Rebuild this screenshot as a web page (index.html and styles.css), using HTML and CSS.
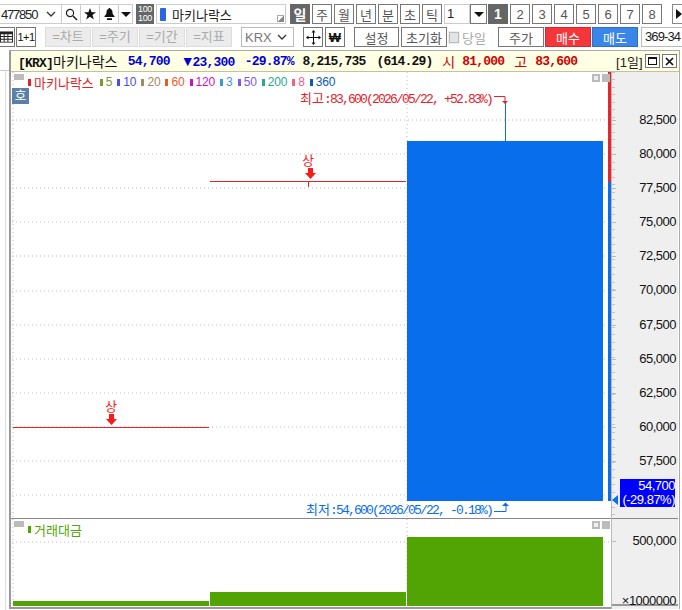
FILE: index.html
```html
<!DOCTYPE html>
<html lang="ko">
<head>
    <meta charset="UTF-8">
    <title>마키나락스 차트</title>
    <link rel="stylesheet" href="styles.css">
</head>
<body>

<div class="rail"></div>

<div class="toolbar toolbar-top">
    <div class="code-box">
        <span>477850</span>
        <svg class="chevron" width="10" height="6" viewBox="0 0 10 6"><path d="M1 1l4 4 4-4" fill="none" stroke="#333" stroke-width="1.3"/></svg>
    </div>
    <button class="tool icon-tool">
        <svg width="13" height="13" viewBox="0 0 13 13"><circle cx="5" cy="5" r="3.6" fill="none" stroke="#222" stroke-width="1.2"/><path d="M8 8l4 4" stroke="#222" stroke-width="1.6"/></svg>
    </button>
    <button class="tool icon-tool">
        <svg width="12" height="12" viewBox="0 0 12 12"><path d="M6 0l1.6 4.2H12L8.500 6.900 9.800 11.500 6 8.800 2.200 11.500 3.500 6.900 0 4.200h4.400z" fill="#111"/></svg>
    </button>
    <button class="tool icon-tool">
        <svg width="11" height="12" viewBox="0 0 11 12"><path d="M5.500 0c.7 0 1 .5 1 1 1.500.5 2 1.800 2 3.500 0 1.500.8 2.800 2 3.500v1H.5V8c1.200-.7 2-2 2-3.500 0-1.700.5-3 2-3.500 0-.5.300-1 1-1zM3 10.300h5V12H3z" fill="#111"/></svg>
    </button>
    <button class="tool caret-tool"><i class="caret"></i></button>
    <div class="group-box"><span>100</span><span>100</span></div>
    <div class="name-box">
        <i class="name-mark"></i>
        <span>마키나락스</span>
        <i class="grip"></i>
    </div>
    <div class="period-group">
        <button class="tool period on">일</button>
        <button class="tool period">주</button>
        <button class="tool period">월</button>
        <button class="tool period">년</button>
        <button class="tool period">분</button>
        <button class="tool period">초</button>
        <button class="tool period">틱</button>
    </div>
    <div class="count-box"><span>1</span></div>
    <button class="tool count-drop"><i class="caret"></i></button>
    <div class="number-group">
        <button class="tool period on">1</button>
        <button class="tool period">2</button>
        <button class="tool period">3</button>
        <button class="tool period">4</button>
        <button class="tool period">5</button>
        <button class="tool period">6</button>
        <button class="tool period">7</button>
        <button class="tool period">8</button>
    </div>
    <button class="tool more"><i class="caret-right"></i></button>
</div>

<div class="toolbar toolbar-second">
    <button class="tool table-tool">
        <svg width="14" height="12" viewBox="0 0 14 12"><path d="M0 0h14v12H0z" fill="#222"/><path d="M1 3h3v2H1zM5 3h3v2H5zM9 3h4v2H9zM1 6h3v2H1zM5 6h3v2H5zM9 6h4v2H9zM1 9h3v2H1zM5 9h3v2H5zM9 9h4v2H9z" fill="#fff"/></svg>
    </button>
    <button class="tool ratio">1+1</button>
    <div class="chart-tabs">
        <span class="chart-tab">=차트</span>
        <span class="chart-tab">=주기</span>
        <span class="chart-tab">=기간</span>
        <span class="chart-tab">=지표</span>
    </div>
    <div class="market-box">
        <span>KRX</span>
        <svg width="10" height="6" viewBox="0 0 10 6"><path d="M1 1l4 4 4-4" fill="none" stroke="#333" stroke-width="1.3"/></svg>
    </div>
    <button class="tool wide-icon move-tool">
        <svg width="15" height="15" viewBox="0 0 15 15"><path d="M7.500 1v13M1 7.500h13" stroke="#111" stroke-width="1"/><path d="M7.500 0l2 2.500h-4zM7.500 15l2-2.500h-4zM0 7.500l2.500-2v4zM15 7.500l-2.500-2v4z" fill="#111"/></svg>
    </button>
    <button class="tool wide-icon won">₩</button>
    <button class="tool action first-action">설정</button>
    <button class="tool action">초기화</button>
    <label class="today"><i class="check"></i><span>당일</span></label>
    <button class="tool action price">주가</button>
    <button class="tool action buy">매수</button>
    <button class="tool action sell">매도</button>
    <div class="range-box">369-34</div>
</div>

<div class="window">
    <div class="titlebar">
        <span class="tt name">[KRX]<span class="ko">마키나락스</span></span>
        <span class="tt blue last">54,700</span>
        <span class="tt blue change"><span class="ko down">▼</span>23,300</span>
        <span class="tt blue rate">-29.87%</span>
        <span class="tt volume">8,215,735</span>
        <span class="tt amount">(614.29)</span>
        <span class="tt red open-l"><span class="ko">시</span></span>
        <span class="tt red open-v">81,000</span>
        <span class="tt red high-l"><span class="ko">고</span></span>
        <span class="tt red high-v">83,600</span>
        <span class="term">[1일]</span>
        <button class="win-btn"><i class="win-max"></i></button>
        <button class="win-btn"><svg width="9" height="9" viewBox="0 0 9 9"><path d="M1 1l7 7M8 1L1 8" stroke="#111" stroke-width="1.700"/></svg></button>
    </div>

    <div class="chart-body">
        <div class="panes">
            <div class="pane price-pane">
                <svg class="canvas" width="600" height="446" viewBox="0 0 600 446">
                    <g class="grid">
                        <path d="M1 48H599M1 82H599M1 116H599M1 150H599M1 184H599M1 219H599M1 253H599M1 287H599M1 321H599M1 355H599M1 389H599M1 423H599"/>
                        <path d="M2 0V446M396 0V446"/>
                    </g>
                    <rect x="396" y="69" width="196" height="360" fill="#086eec"/>
                    <rect x="494" y="31" width="1" height="38" fill="#086eec"/>
                    <rect x="597" y="0" width="3" height="110" fill="#e8252b"/>
                    <rect x="597" y="110" width="3" height="319" fill="#086eec"/>
                    <path d="M199 109.500H395M297.500 109.500V115M2 355.500H198" stroke="#e3232a" fill="none"/>
                    <path d="M294 96h5v5h3l-5.500 6-5.500-6h3zM95 342h5v5h3l-5.500 6-5.500-6h3z" fill="#f91a1a" transform="translate(3 0)"/>
                    <path d="M483 24.500h11V30" stroke="#e3232a" fill="none"/>
                    <path d="M491 29h6l-3 3z" fill="#e3232a"/>
                    <path d="M483 439.500h12V433" stroke="#086eec" fill="none"/>
                    <path d="M491 434l3.500-3.500 3.500 3.500z" fill="#086eec"/>
                </svg>

                <div class="legend">
                    <i class="flag"></i>
                    <span class="lg c-main"><i></i>마키나락스</span>
                    <span class="lg c5"><i></i>5</span>
                    <span class="lg c10"><i></i>10</span>
                    <span class="lg c20"><i></i>20</span>
                    <span class="lg c60"><i></i>60</span>
                    <span class="lg c120"><i></i>120</span>
                    <span class="lg c3"><i></i>3</span>
                    <span class="lg c50"><i></i>50</span>
                    <span class="lg c200"><i></i>200</span>
                    <span class="lg c8"><i></i>8</span>
                    <span class="lg c360"><i></i>360</span>
                </div>
                <div class="pane-btns"><i class="pane-min"></i><i class="pane-close"></i></div>
                <span class="ho">호</span>
                <span class="note high-note"><span class="ko">최고</span>:83,600(2026/05/22, +52.83%)</span>
                <span class="note low-note"><span class="ko">최저</span>:54,600(2026/05/22, -0.18%)</span>
                <span class="limit limit-one">상</span>
                <span class="limit limit-two">상</span>
            </div>
            <div class="pane volume-pane">
                <svg class="canvas" width="600" height="88" viewBox="0 0 600 88">
                    <g class="grid">
                        <path d="M1 23H599"/>
                        <path d="M2 0V88M396 0V88"/>
                    </g>
                    <rect x="2" y="82" width="196" height="5" fill="#52a404"/>
                    <rect x="199" y="73" width="196" height="14" fill="#52a404"/>
                    <rect x="396" y="18" width="196" height="69" fill="#52a404"/>
                </svg>
                <div class="legend">
                    <i class="flag"></i>
                    <span class="lg c-vol"><i></i>거래대금</span>
                </div>
                <div class="pane-btns"><i class="pane-min"></i><i class="pane-close"></i></div>
            </div>
        </div>

        <div class="axis">
            <div class="axis-price">
                <div class="axis-labels">
                    <span>82,500</span>
                    <span>80,000</span>
                    <span>77,500</span>
                    <span>75,000</span>
                    <span>72,500</span>
                    <span>70,000</span>
                    <span>67,500</span>
                    <span>65,000</span>
                    <span>62,500</span>
                    <span>60,000</span>
                    <span>57,500</span>
                </div>
                <i class="pointer"></i>
                <div class="current"><span>54,700</span><span>(-29.87%)</span></div>
            </div>
            <div class="axis-volume">
                <span class="vol-tick">500,000</span>
                <span class="vol-unit">×1000000</span>
            </div>
        </div>
    </div>
</div>

</body>
</html>
```

FILE: styles.css
```css
html, body {
    margin: 0;
    height: 610px;
    overflow: hidden;
    background: #fff;
}

body {
    font-family: "Liberation Sans", "Noto Sans CJK KR", sans-serif;
    font-size: 13px;
    color: #222;
    position: relative;
}

i { display: block; }

button {
    font-family: inherit;
    padding: 0;
    margin: 0;
}

/* left edge of the neighbouring panel */
.rail {
    position: absolute;
    left: 0;
    top: 70px;
    width: 5px;
    height: 540px;
    border-top: 1px solid #ccc;
    border-right: 1px solid #ddd;
}
.rail::after {
    content: "";
    position: absolute;
    left: 6px;
    top: -1px;
    width: 3px;
    height: 1px;
    background: #ccc;
}

/* toolbars */
.toolbar {
    display: flex;
    height: 20px;
    white-space: nowrap;
    width: 700px;
}
.toolbar > * { flex-shrink: 0; }
.toolbar-top { margin-top: 4px; }
.toolbar-second { margin-top: 3px; }

.tool {
    box-sizing: border-box;
    height: 20px;
    width: 20px;
    background: #fff;
    border: 1px solid #777;
    color: #555;
    font-size: 13px;
    display: flex;
    align-items: center;
    justify-content: center;
}
.icon-tool { width: 19px; border-color: #ccc; border-width: 1px 1px 1px 0; }
.caret-tool { width: 14px; border-color: #ccc; border-width: 1px 1px 1px 0; }
.caret {
    width: 0;
    height: 0;
    border: 5px solid transparent;
    border-top: 5px solid #111;
    border-bottom: 0;
}
.caret-right {
    width: 0;
    height: 0;
    border: 5px solid transparent;
    border-left: 6px solid #111;
    border-right: 0;
}

.code-box {
    box-sizing: border-box;
    width: 62px;
    padding: 0 5px 0 1px;
    display: flex;
    align-items: center;
    justify-content: space-between;
    border: 1px solid #ccc;
    border-left: 0;
    letter-spacing: -1.2px;
}
.group-box {
    box-sizing: border-box;
    width: 18px;
    margin-left: 3px;
    background: #666;
    color: #fff;
    font-size: 9px;
    line-height: 9px;
    letter-spacing: -0.3px;
    display: flex;
    flex-direction: column;
    align-items: center;
    justify-content: center;
}
.name-box {
    box-sizing: border-box;
    width: 130px;
    margin-left: 2px;
    padding-left: 3px;
    border: 1px solid #ccc;
    display: flex;
    align-items: center;
    position: relative;
    color: #222;
}
.name-mark {
    width: 6px;
    height: 13px;
    margin-right: 6px;
    background: #2a66e0;
    border-radius: 1px;
}
.grip {
    position: absolute;
    right: 1px;
    bottom: 1px;
    width: 7px;
    height: 7px;
    background: linear-gradient(135deg, transparent 50%, #888 50%);
    border-top: 1px solid #aaa;
    border-left: 1px solid #aaa;
    box-sizing: border-box;
}

.period-group, .number-group {
    display: flex;
    gap: 2px;
}
.period-group { margin-left: 4px; }
.period.on {
    background: #666;
    border-color: #666;
    color: #fff;
    font-weight: bold;
    font-size: 14px;
}
.count-box {
    box-sizing: border-box;
    width: 26px;
    margin-left: 2px;
    padding-left: 2px;
    border: 1px solid #ccc;
    line-height: 18px;
}
.count-drop { width: 17px; }
.number-group { margin-left: 1px; }
.more { margin-left: 10px; width: 14px; border-color: #888; }

.table-tool {
    width: 15px;
    border-left: 0;
    justify-content: flex-end;
    padding-right: 1px;
}
.ratio {
    width: 20px;
    margin-left: 1px;
    font-size: 11px;
    color: #111;
    letter-spacing: -0.5px;
}
.chart-tabs {
    display: flex;
    gap: 1px;
    margin-left: 9px;
}
.chart-tab {
    box-sizing: border-box;
    width: 46px;
    background: #ececec;
    border: 1px solid #ddd;
    color: #aaa;
    text-align: center;
    line-height: 18px;
}
.market-box {
    box-sizing: border-box;
    width: 53px;
    margin-left: 9px;
    padding: 0 6px 0 3px;
    border: 1px solid #bbb;
    color: #777;
    display: flex;
    align-items: center;
    justify-content: space-between;
}
.wide-icon { width: 20px; }
.move-tool { margin-left: 9px; }
.won { margin-left: 2px; font-size: 13px; font-weight: bold; color: #111; }
.action {
    width: 46px;
    margin-left: 2px;
}
.first-action { margin-left: 9px; width: 45px; }
.today {
    width: 37px;
    margin-left: 2px;
    display: flex;
    align-items: center;
    gap: 3px;
    color: #aaa;
}
.check {
    box-sizing: border-box;
    width: 11px;
    height: 11px;
    border: 1px solid #bbb;
    background: #e4e4e4;
    outline: 1px solid #eee;
}
.price { margin-left: 12px; }
.buy {
    margin-left: 1px;
    background: #f4363a;
    border-color: #d9282c;
    color: #fff;
}
.sell {
    margin-left: 1px;
    background: #3a86e8;
    border-color: #2c70cc;
    color: #fff;
}
.range-box {
    box-sizing: border-box;
    width: 42px;
    margin-left: 3px;
    padding-left: 3px;
    border: 1px solid #bbb;
    border-right: 0;
    line-height: 18px;
    overflow: hidden;
    letter-spacing: -0.9px;
}

/* chart window */
.window {
    margin: 3px 2px 0 9px;
    border: 1px solid #aaa;
    border-width: 1px 1px 0 2px;
    border-left-color: #999;
}
.titlebar {
    box-sizing: border-box;
    height: 21px;
    display: flex;
    align-items: center;
    background: #ffffe4;
    border-bottom: 1px solid #c4c0a0;
    white-space: nowrap;
    position: relative;
}
.tt {
    font-family: "Liberation Mono", "Noto Sans CJK KR", monospace;
    font-weight: bold;
    font-size: 13px;
    letter-spacing: -0.8px;
    color: #111;
}
.tt .ko {
    font-family: "Liberation Sans", "Noto Sans CJK KR", sans-serif;
    font-size: 14px;
    font-weight: normal;
    letter-spacing: 0;
}
.tt .down { letter-spacing: -2px; }
.blue { color: #0000d8; }
.red { color: #d00000; }
.name { margin-left: 7px; width: 110px; }
.last { width: 53px; }
.change { width: 64px; }
.rate { width: 58px; }
.volume { width: 74px; }
.amount { width: 66px; }
.open-l { width: 20px; }
.open-v { width: 52px; }
.high-l { width: 21px; }
.high-v { width: 81px; }
.term { width: 29px; }
.win-btn {
    box-sizing: border-box;
    width: 15px;
    height: 14px;
    margin-right: 2px;
    background: #fff;
    border: 1px solid #777;
    display: flex;
    align-items: center;
    justify-content: center;
}
.win-max {
    box-sizing: border-box;
    width: 9px;
    height: 8px;
    border: 1px solid #111;
    border-top-width: 2px;
}

.chart-body { display: flex; }
.panes { width: 600px; }
.pane {
    position: relative;
    background: #fff;
    overflow: hidden;
}
.price-pane {
    height: 446px;
    border-bottom: 1px solid #888;
}
.volume-pane {
    height: 88px;
    border-bottom: 2px solid #999;
}
.canvas {
    position: absolute;
    left: 0;
    top: 0;
}
.grid path {
    fill: none;
    stroke: #bbb;
    stroke-width: 1;
    stroke-dasharray: 1 3;
}

/* legends */
.legend {
    position: absolute;
    left: 3px;
    top: 2px;
    display: flex;
    align-items: center;
    height: 16px;
}
.flag {
    width: 10px;
    height: 6px;
    margin: -10px 4px 0 0;
    background: #bbb;
}
.lg {
    display: flex;
    align-items: center;
    gap: 3px;
    margin-right: 5px;
    font-size: 12px;
    letter-spacing: -0.15px;
}
.lg i {
    width: 3px;
    height: 7px;
    background: currentColor;
}
.c-main { color: #e3232a; font-size: 13px; letter-spacing: 0; margin-right: 6px; }
.c5 { color: #7a9a2e; }
.c10 { color: #4c4ce8; }
.c20 { color: #a08a60; }
.c60 { color: #f05a1e; }
.c120 { color: #c814c8; }
.c3 { color: #3a9ad8; }
.c50 { color: #7a5ae8; }
.c200 { color: #2aa890; }
.c8 { color: #f0608a; }
.c360 { color: #0a5ab4; }
.c-vol { color: #52a404; font-size: 13px; letter-spacing: 0; }

.pane-btns {
    position: absolute;
    right: 0;
    top: 2px;
    display: flex;
    gap: 2px;
    padding-right: 1px;
}
.pane-btns i {
    box-sizing: border-box;
    width: 8px;
    height: 8px;
}
.pane-min {
    background: #eee;
    border: 2px solid #bbb;
}
.pane-close { background: #bbb; }

.ho {
    position: absolute;
    left: 1px;
    top: 16px;
    width: 17px;
    height: 16px;
    background: #5a80a8;
    color: #fff;
    text-align: center;
    line-height: 16px;
}
.note {
    position: absolute;
    font-family: "Liberation Mono", "Noto Sans CJK KR", monospace;
    font-size: 13px;
    letter-spacing: -1.8px;
    white-space: nowrap;
}
.note .ko {
    font-family: "Liberation Sans", "Noto Sans CJK KR", sans-serif;
    letter-spacing: 0;
}
.high-note { left: 289px; top: 16px; color: #e3232a; }
.low-note { left: 295px; top: 427px; color: #086eec; }
.limit {
    position: absolute;
    width: 12px;
    text-align: center;
    color: #f91a1a;
    line-height: 14px;
}
.limit-one { left: 291px; top: 82px; }
.limit-two { left: 94px; top: 328px; }

/* right axis */
.axis {
    width: 67px;
    background: #efefef;
    border-left: 1px solid #bbb;
    box-sizing: border-box;
    text-align: right;
    color: #111;
    letter-spacing: -0.5px;
}
.axis-price {
    height: 447px;
    position: relative;
    border-bottom: 1px solid #888;
    box-sizing: border-box;
    background: repeating-linear-gradient(to bottom, #c4c4c4 0, #c4c4c4 1px, transparent 1px, transparent 7.5px) no-repeat 0 0 / 3px 100%;
}
.axis-labels {
    display: flex;
    flex-direction: column;
    padding: 31px 2px 0 0;
}
.axis-labels span {
    height: 34.1px;
    line-height: 34px;
    position: relative;
}
.axis-labels span::before {
    content: "";
    position: absolute;
    left: 0;
    top: 17px;
    width: 4px;
    height: 1px;
    background: #bbb;
}
.pointer {
    position: absolute;
    left: 0;
    top: 423px;
    width: 0;
    height: 0;
    border: 5.5px solid transparent;
    border-right: 6px solid #086eec;
    border-left: 0;
}
.current {
    position: absolute;
    right: 3px;
    top: 407px;
    width: 55px;
    height: 28px;
    background: #0000ff;
    color: #fff;
    display: flex;
    flex-direction: column;
    line-height: 14px;
}
.axis-volume {
    height: 87px;
    box-sizing: border-box;
    padding: 14px 2px 0 0;
    display: flex;
    flex-direction: column;
    justify-content: space-between;
    border-bottom: 2px solid #999;
}
.vol-tick { position: relative; }
.vol-tick::before {
    content: "";
    position: absolute;
    left: 0;
    top: 8px;
    width: 4px;
    height: 1px;
    background: #bbb;
}
.vol-unit { margin-bottom: -4px; }
```
